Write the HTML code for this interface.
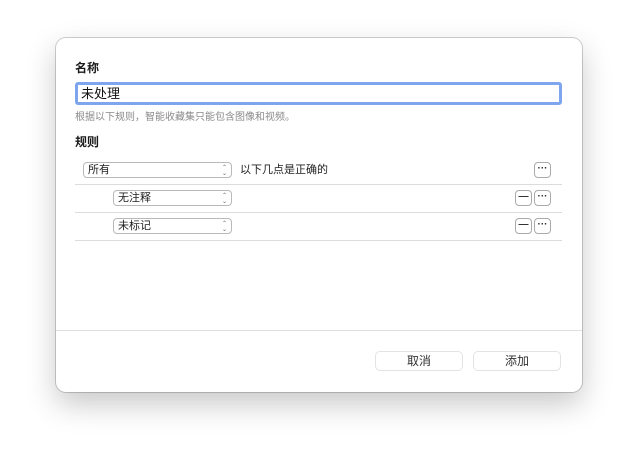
<!DOCTYPE html>
<html><head><meta charset="utf-8"><style>
body{margin:0;width:638px;height:466px;background:#fff;font-family:"Liberation Sans","Noto Sans CJK SC",sans-serif;position:relative;overflow:hidden}
.d{position:absolute;left:56px;top:38px;width:526px;height:354px;background:#fff;border-radius:10px;box-shadow:0 0 0 1px rgba(0,0,0,.18),0 12px 30px rgba(0,0,0,.22)}
.a{position:absolute}
.t{font-size:12px;font-weight:bold;color:#1a1a1a}
.pop{position:absolute;height:14px;border:1px solid #b9b9b9;border-radius:4px;font-size:11px;line-height:14px;padding-left:4px;color:#222}
.pop:after{content:"⌃\A⌄";white-space:pre;position:absolute;right:4px;top:0;font-size:6px;line-height:6px;color:#666;padding-top:2px}
.ln{position:absolute;left:75px;width:487px;height:1px;background:#dcdcdc}
.b{position:absolute;width:15px;height:14px;border:1px solid #aaa;border-radius:4px;font-size:10px;font-weight:bold;line-height:11px;text-align:center;color:#333;background:#fff}
.btn{position:absolute;width:86px;height:18px;border:1px solid #e3e3e3;border-radius:5px;font-size:12px;line-height:18px;text-align:center;color:#333;background:#fff}
</style></head><body>
<div class="d"></div>
<div class="a t" style="left:75px;top:59px">名称</div>
<div class="a" style="left:75px;top:82px;width:478px;height:17px;border:3px solid #7ea6ee;border-radius:3px;font-size:13px;line-height:17px;padding-left:3px;color:#111">未处理</div>
<div class="a" style="left:75px;top:108px;font-size:10px;color:#8a8a8a">根据以下规则，智能收藏集只能包含图像和视频。</div>
<div class="a t" style="left:75px;top:133px">规则</div>
<div class="pop" style="left:83px;top:162px;width:143px">所有</div>
<div class="a" style="left:240px;top:162px;font-size:11px;line-height:16px;color:#222">以下几点是正确的</div>
<div class="b" style="left:534px;top:162px">···</div>
<div class="ln" style="top:184px"></div>
<div class="pop" style="left:113px;top:190px;width:113px">无注释</div>
<div class="b" style="left:515px;top:190px">—</div><div class="b" style="left:534px;top:190px">···</div>
<div class="ln" style="top:212px"></div>
<div class="pop" style="left:113px;top:218px;width:113px">未标记</div>
<div class="b" style="left:515px;top:218px">—</div><div class="b" style="left:534px;top:218px">···</div>
<div class="ln" style="top:240px"></div>
<div class="a" style="left:56px;top:330px;width:526px;height:1px;background:#e0e0e0"></div>
<div class="btn" style="left:375px;top:351px">取消</div>
<div class="btn" style="left:473px;top:351px">添加</div>
</body></html>
